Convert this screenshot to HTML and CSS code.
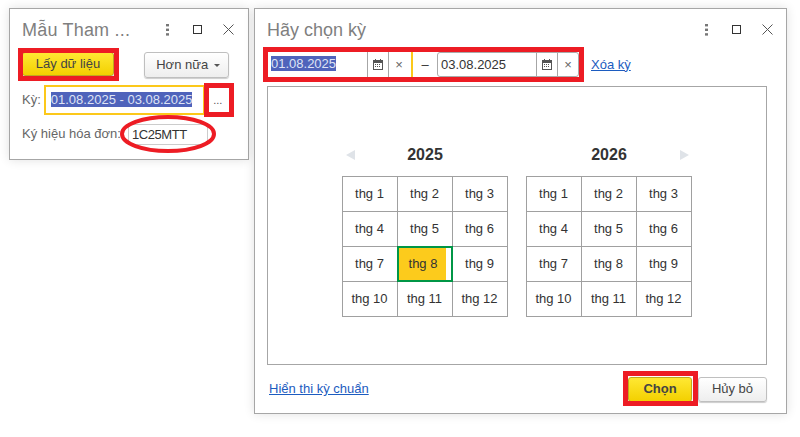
FILE: index.html
```html
<!DOCTYPE html>
<html lang="vi">
<head>
<meta charset="utf-8">
<title>Hãy chọn kỳ</title>
<link rel="stylesheet" href="styles.css">
</head>
<body>
<section class="win win-left">
  <header class="titlebar">
    <h1 class="title title-short">Mẫu Tham ...</h1>
    <div class="win-icons">
      <svg width="10" height="12" viewBox="0 0 10 12"><g fill="#777"><rect x="3" y="0" width="3" height="2.4"/><rect x="3" y="4.6" width="3" height="2.4"/><rect x="3" y="9.2" width="3" height="2.4"/></g></svg>
      <svg width="10" height="10" viewBox="0 0 10 10"><rect x=".5" y=".5" width="8" height="8" fill="none" stroke="#333"/></svg>
      <svg width="11" height="11" viewBox="0 0 11 11"><path d="M.5.5l10 10M10.500.5l-10 10" stroke="#555" fill="none"/></svg>
    </div>
  </header>
  <div class="toolbar">
    <button class="btn btn-yellow btn-get">Lấy dữ liệu</button>
    <button class="btn btn-more">Hơn nữa <span class="caret"></span></button>
  </div>
  <div class="row-period">
    <label class="lbl">Kỳ:</label>
    <div class="period-input"><span class="sel">01.08.2025 - 03.08.2025</span></div>
    <span class="dots">...</span>
  </div>
  <div class="row-symbol">
    <label class="lbl">Ký hiệu hóa đơn:</label>
    <div class="symbol-input">1C25MTT</div>
  </div>
  <div class="mark mark-get"></div>
  <div class="mark mark-dots"></div>
  <svg class="mark-oval" width="96" height="40" viewBox="0 0 96 40"><ellipse cx="48" cy="20" rx="46" ry="17" fill="none" stroke="#ed1c24" stroke-width="4"/></svg>
</section>

<section class="win win-right">
  <header class="titlebar">
    <h1 class="title">Hãy chọn kỳ</h1>
    <div class="win-icons">
      <svg width="10" height="12" viewBox="0 0 10 12"><g fill="#777"><rect x="3" y="0" width="3" height="2.4"/><rect x="3" y="4.6" width="3" height="2.4"/><rect x="3" y="9.2" width="3" height="2.4"/></g></svg>
      <svg width="10" height="10" viewBox="0 0 10 10"><rect x=".5" y=".5" width="8" height="8" fill="none" stroke="#333"/></svg>
      <svg width="11" height="11" viewBox="0 0 11 11"><path d="M.5.5l10 10M10.500.5l-10 10" stroke="#555" fill="none"/></svg>
    </div>
  </header>
  <div class="range">
    <div class="date date-first">
      <span class="date-text"><span class="sel">01.08.2025</span></span>
      <span class="date-btn"><svg width="10" height="11" viewBox="0 0 10 11"><path d="M0 1h10v10H0z" fill="#555"/><path d="M1 4h8v6H1z" fill="#fff"/><path d="M2 0h1v2H2zM7 0h1v2H7zM2 5h1v1H2zM4 5h1v1H4zM6 5h1v1H6zM2 7h1v1H2zM4 7h1v1H4zM6 7h1v1H6z" fill="#555"/></svg></span>
      <span class="date-btn date-x date-x-wide">×</span>
    </div>
    <span class="dash">–</span>
    <div class="date date-second">
      <span class="date-text">03.08.2025</span>
      <span class="date-btn"><svg width="10" height="11" viewBox="0 0 10 11"><path d="M0 1h10v10H0z" fill="#555"/><path d="M1 4h8v6H1z" fill="#fff"/><path d="M2 0h1v2H2zM7 0h1v2H7zM2 5h1v1H2zM4 5h1v1H4zM6 5h1v1H6zM2 7h1v1H2zM4 7h1v1H4zM6 7h1v1H6z" fill="#555"/></svg></span>
      <span class="date-btn date-x">×</span>
    </div>
    <a class="link link-clear" href="#">Xóa kỳ</a>
  </div>
  <div class="calendar">
    <div class="year">
      <div class="year-head">
        <svg class="arrow" width="9" height="10" viewBox="0 0 9 10"><path d="M9 0v10L0 5z" fill="#dfe3e8"/></svg>
        <span class="year-num">2025</span>
      </div>
      <div class="months">
        <div class="m">thg 1</div><div class="m">thg 2</div><div class="m">thg 3</div>
        <div class="m">thg 4</div><div class="m">thg 5</div><div class="m">thg 6</div>
        <div class="m">thg 7</div><div class="m m-on">thg 8</div><div class="m">thg 9</div>
        <div class="m">thg 10</div><div class="m">thg 11</div><div class="m">thg 12</div>
      </div>
    </div>
    <div class="year">
      <div class="year-head">
        <span class="year-num">2026</span>
        <svg class="arrow arrow-next" width="9" height="10" viewBox="0 0 9 10"><path d="M0 0v10l9-5z" fill="#dfe3e8"/></svg>
      </div>
      <div class="months">
        <div class="m">thg 1</div><div class="m">thg 2</div><div class="m">thg 3</div>
        <div class="m">thg 4</div><div class="m">thg 5</div><div class="m">thg 6</div>
        <div class="m">thg 7</div><div class="m">thg 8</div><div class="m">thg 9</div>
        <div class="m">thg 10</div><div class="m">thg 11</div><div class="m">thg 12</div>
      </div>
    </div>
  </div>
  <footer class="foot">
    <a class="link" href="#">Hiển thi kỳ chuẩn</a>
    <div class="foot-btns">
      <button class="btn btn-yellow btn-choose">Chọn</button>
      <button class="btn btn-cancel">Hủy bỏ</button>
    </div>
  </footer>
  <div class="mark mark-range"></div>
  <div class="mark mark-choose"></div>
</section>
</body>
</html>
```
FILE: styles.css
```css
* { box-sizing: border-box; }
html, body { margin: 0; height: 100%; }
body { background: #fff; font: 13px/16px "Liberation Sans", Arial, sans-serif; color: #333; overflow: hidden; position: relative; }

.win { position: absolute; background: #fff; border: 1px solid #a6a6a6; box-shadow: 0 0 10px rgba(0,0,0,.12); display: flex; flex-direction: column; }
.win-left { left: 9px; top: 8px; width: 240px; height: 152px; padding: 0 12px; }
.win-right { left: 254px; top: 8px; width: 533px; height: 406px; padding: 0 19px 0 12px; }

.titlebar { display: flex; align-items: center; justify-content: space-between; height: 41px; flex: none; }
.title { margin: 0; font-size: 18px; line-height: 22px; font-weight: normal; color: #7f7f7f; }
.title-short { letter-spacing: .2px; }
.win-icons { display: flex; align-items: center; gap: 20px; margin-right: 2px; }
.win-right .win-icons { margin-right: -6px; }

.btn { font: inherit; cursor: pointer; padding: 0; color: #444; border: 1px solid #bfbfbf; border-radius: 3px; background: linear-gradient(#fff, #eee); box-shadow: 0 1px 1px rgba(0,0,0,.2); }
.btn-yellow { background: linear-gradient(#ffe833, #f3d000); border: 1px solid #c0a820; }

.toolbar { display: flex; justify-content: space-between; align-items: flex-start; height: 33px; flex: none; margin-top: 2px; padding-right: 7px; }
.btn-get { width: 92px; height: 24px; }
.btn-more { width: 85px; height: 26px; padding-left: 3px; }
.caret { display: inline-block; margin-left: 2px; vertical-align: 2px; border: 3px solid transparent; border-top-color: #555; border-bottom: 0; }

.row-period { display: flex; align-items: center; height: 30px; flex: none; }
.lbl { color: #666; }
.period-input { margin-left: 3px; width: 161px; height: 30px; border: 2px solid #fcc81a; padding: 5px 0 0 5px; white-space: nowrap; }
.sel { background: #4f63bb; color: #dfe3f5; }
.dots { margin-left: 5px; width: 16px; text-align: center; font-size: 11px; color: #555; }

.row-symbol { display: flex; align-items: center; height: 22px; flex: none; margin-top: 8px; }
.symbol-input { margin-left: 7px; width: 80px; height: 21px; padding: 2px 0 0 3px; border: 1px solid #ccc; border-radius: 3px; letter-spacing: -.4px; }

.mark { position: absolute; border: 5px solid #ed1c24; }
.mark-get { left: 8px; top: 39px; width: 101px; height: 33px; }
.mark-dots { left: 194px; top: 74px; width: 30px; height: 34px; }
.mark-oval { position: absolute; left: 110px; top: 105px; }
.mark-range { left: 8px; top: 38px; width: 321px; height: 35px; }
.mark-choose { left: 368px; top: 362px; width: 75px; height: 35px; }

.range { display: flex; align-items: center; height: 25px; margin-top: 2px; flex: none; }
.date { display: flex; align-items: stretch; height: 25px; }
.date-first { width: 145px; padding-left: 3px; margin-left: 1px; border-right: 2px solid #fcc81a; }
.date-second { width: 142px; border: 1px solid #aaa; border-radius: 3px; padding-left: 3px; }
.date-text { flex: 1; line-height: 23px; white-space: nowrap; font-size: 13px; }
.date-btn { width: 21px; display: flex; align-items: center; justify-content: center; border-left: 1px solid #a6a6a6; color: #666; }
.date-x { font-size: 13px; }
.date-x-wide { width: 23px; padding-right: 2px; }
.dash { width: 24px; text-align: center; color: #333; }
.link { color: #1c5cc0; text-decoration: underline; }
.link-clear { margin-left: 12px; }

.calendar { height: 279px; margin-top: 9px; border: 1px solid #a6a6a6; flex: none; display: flex; justify-content: center; gap: 18px; padding-top: 56px; }
.year { width: 166px; }
.year-head { position: relative; height: 33px; display: flex; justify-content: center; }
.year-num { font-size: 16px; font-weight: bold; line-height: 24px; color: #333; }
.arrow { position: absolute; left: 4px; top: 7px; }
.arrow-next { left: auto; right: 3px; }
.months { display: grid; grid-template-columns: repeat(3, 54px); grid-auto-rows: 34px; gap: 1px; padding: 1px; background: #a0a0a0; }
.m { background: #fff; display: flex; align-items: center; justify-content: center; color: #333; font-size: 13px; padding-right: 1px; }
.m-on { position: relative; margin: -1px; border: 2px solid #009646; background: linear-gradient(90deg, #fccb1c 47px, #fff 47px); padding-right: 4px; }

.foot { display: flex; align-items: center; justify-content: space-between; flex: 1; padding: 11px 0 11px 2px; }
.foot-btns { display: flex; gap: 6px; }
.btn-choose { width: 64px; height: 25px; font-weight: bold; }
.btn-cancel { width: 69px; height: 25px; }
```
